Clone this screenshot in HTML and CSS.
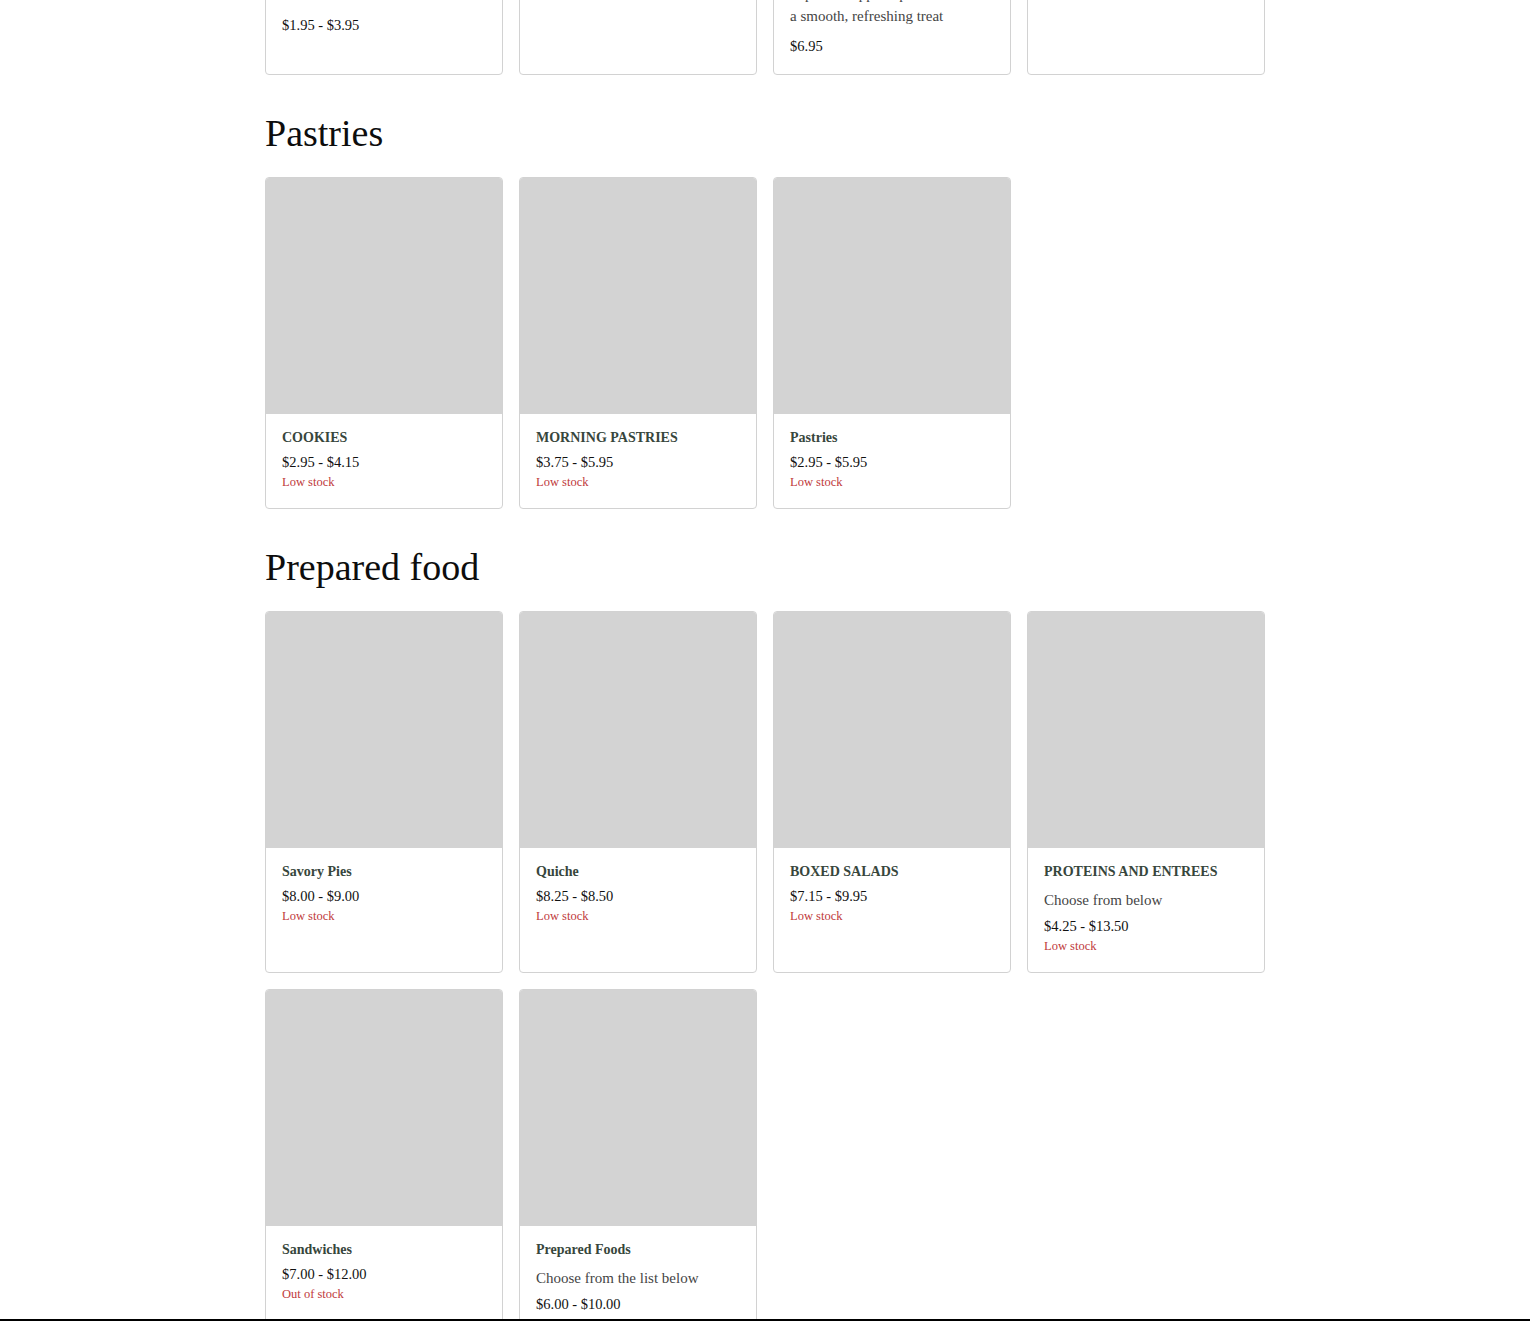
FILE: index.html
```html
<!DOCTYPE html>
<html lang="en">
<head>
<meta charset="utf-8">
<title>Menu</title>
<link rel="stylesheet" href="styles.css">
</head>
<body>
<main class="menu">
  <section class="category category--first">
    <div class="grid">
      <article class="card">
        <div class="card__image"></div>
        <div class="card__body">
          <h3 class="card__title">Drip Coffee</h3>
          <p class="card__price card__price--spaced">$1.95 - $3.95</p>
        </div>
      </article>
      <article class="card">
        <div class="card__image"></div>
        <div class="card__body">
          <h3 class="card__title">Espresso Drinks</h3>
        </div>
      </article>
      <article class="card">
        <div class="card__image"></div>
        <div class="card__body">
          <h3 class="card__title">Iced Frappe</h3>
          <p class="card__desc card__desc--wrapped">Espresso topped up for<br>a smooth, refreshing treat</p>
          <p class="card__price">$6.95</p>
        </div>
      </article>
      <article class="card">
        <div class="card__image"></div>
        <div class="card__body">
          <h3 class="card__title">Tea</h3>
        </div>
      </article>
    </div>
  </section>

  <section class="category">
    <h2 class="category__title">Pastries</h2>
    <div class="grid">
      <article class="card">
        <div class="card__image"></div>
        <div class="card__body">
          <h3 class="card__title">COOKIES</h3>
          <p class="card__price">$2.95 - $4.15</p>
          <p class="card__stock">Low stock</p>
        </div>
      </article>
      <article class="card">
        <div class="card__image"></div>
        <div class="card__body">
          <h3 class="card__title">MORNING PASTRIES</h3>
          <p class="card__price">$3.75 - $5.95</p>
          <p class="card__stock">Low stock</p>
        </div>
      </article>
      <article class="card">
        <div class="card__image"></div>
        <div class="card__body">
          <h3 class="card__title">Pastries</h3>
          <p class="card__price">$2.95 - $5.95</p>
          <p class="card__stock">Low stock</p>
        </div>
      </article>
    </div>
  </section>

  <section class="category">
    <h2 class="category__title">Prepared food</h2>
    <div class="grid">
      <article class="card">
        <div class="card__image"></div>
        <div class="card__body">
          <h3 class="card__title">Savory Pies</h3>
          <p class="card__price">$8.00 - $9.00</p>
          <p class="card__stock">Low stock</p>
        </div>
      </article>
      <article class="card">
        <div class="card__image"></div>
        <div class="card__body">
          <h3 class="card__title">Quiche</h3>
          <p class="card__price">$8.25 - $8.50</p>
          <p class="card__stock">Low stock</p>
        </div>
      </article>
      <article class="card">
        <div class="card__image"></div>
        <div class="card__body">
          <h3 class="card__title">BOXED SALADS</h3>
          <p class="card__price">$7.15 - $9.95</p>
          <p class="card__stock">Low stock</p>
        </div>
      </article>
      <article class="card">
        <div class="card__image"></div>
        <div class="card__body">
          <h3 class="card__title">PROTEINS AND ENTREES</h3>
          <p class="card__desc">Choose from below</p>
          <p class="card__price">$4.25 - $13.50</p>
          <p class="card__stock">Low stock</p>
        </div>
      </article>
      <article class="card">
        <div class="card__image"></div>
        <div class="card__body">
          <h3 class="card__title">Sandwiches</h3>
          <p class="card__price">$7.00 - $12.00</p>
          <p class="card__stock">Out of stock</p>
        </div>
      </article>
      <article class="card">
        <div class="card__image"></div>
        <div class="card__body">
          <h3 class="card__title">Prepared Foods</h3>
          <p class="card__desc">Choose from the list below</p>
          <p class="card__price">$6.00 - $10.00</p>
          <p class="card__stock">Low stock</p>
        </div>
      </article>
    </div>
  </section>
</main>
<div class="bottom-rule"></div>
</body>
</html>
```

FILE: styles.css
```css
* { box-sizing: border-box; }

html, body {
  margin: 0;
  padding: 0;
  background: #ffffff;
}

body {
  font-family: "Liberation Serif", "Times New Roman", serif;
  color: #111111;
}

.menu {
  width: 1000px;
  margin: 0 auto;
  padding-bottom: 80px;
}

.category--first {
  margin-top: -290px;
}

.category__title {
  margin: 36px 0 22px;
  font-family: "Liberation Serif", "Times New Roman", serif;
  font-weight: 400;
  font-size: 38px;
  line-height: 44px;
  color: #0d0d0d;
}

.grid {
  display: grid;
  grid-template-columns: repeat(4, 238px);
  gap: 16px;
}

.card {
  border: 1px solid #d2d2d2;
  border-radius: 4px;
  background: #ffffff;
  overflow: hidden;
}

.card__image {
  height: 236px;
  background: #d3d3d3;
}

.card__body {
  padding: 15px 16px 18px;
}

.card__title {
  margin: 0;
  font-family: "Liberation Serif", "Times New Roman", serif;
  font-weight: 700;
  font-size: 14px;
  line-height: 18px;
  color: #37463c;
}

.card__desc {
  margin: 8px 0 4px;
  font-size: 15px;
  line-height: 22px;
  color: #454545;
}

.card__desc--wrapped {
  margin-top: 3px;
  margin-bottom: 9px;
}

.card__price {
  margin: 5px 0 0;
  font-size: 14.5px;
  line-height: 20px;
  color: #111111;
}

.card__price--spaced {
  margin-top: 35px;
}

.card__stock {
  margin: 2px 0 0;
  font-size: 12.5px;
  line-height: 16px;
  color: #c0393b;
}

.bottom-rule {
  position: fixed;
  left: 0;
  right: 0;
  bottom: 0;
  height: 2px;
  background: #000000;
}
```
